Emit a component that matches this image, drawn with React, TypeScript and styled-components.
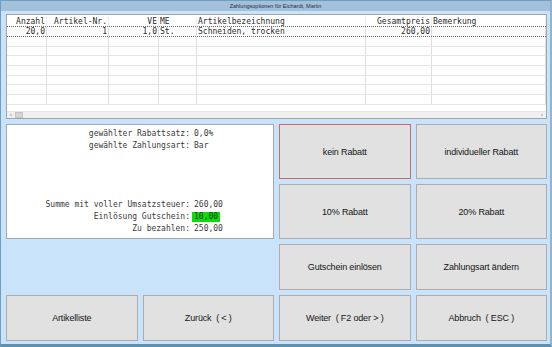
import React from "react"
import styled, { createGlobalStyle } from "styled-components"

const GlobalStyle = createGlobalStyle`
  html, body {
    margin: 0;
    padding: 0;
    overflow: hidden;
  }
  * {
    box-sizing: border-box;
  }
`

type Align = "left" | "right"

interface Column {
  title: string
  width: number
  align: Align
}

const columns: Column[] = [
  { title: "Anzahl", width: 40, align: "right" },
  { title: "Artikel-Nr.", width: 62, align: "right" },
  { title: "VE", width: 50, align: "right" },
  { title: "ME", width: 38, align: "left" },
  { title: "Artikelbezeichnung", width: 169, align: "left" },
  { title: "Gesamtpreis", width: 66, align: "right" },
  { title: "Bemerkung", width: 114, align: "left" },
]

const rows: string[][] = [["20,0", "1", "1,0", "St.", "Schneiden, trocken", "260,00", ""]]

const EMPTY_ROWS = 7

const gridTemplate = columns.map((c) => `${c.width}px`).join(" ")

interface InfoEntry {
  label: string
  value: string
  highlight?: boolean
}

const topInfo: InfoEntry[] = [
  { label: "gewählter Rabattsatz:", value: "0,0%" },
  { label: "gewählte Zahlungsart:", value: "Bar" },
]

const bottomInfo: InfoEntry[] = [
  { label: "Summe mit voller Umsatzsteuer:", value: "260,00" },
  { label: "Einlösung Gutschein:", value: "10,00", highlight: true },
  { label: "Zu bezahlen:", value: "250,00" },
]

interface Action {
  label: string
  col: number
  row: number
  isDefault?: boolean
}

const actions: Action[] = [
  { label: "kein Rabatt", col: 3, row: 1, isDefault: true },
  { label: "individueller Rabatt", col: 4, row: 1 },
  { label: "10% Rabatt", col: 3, row: 2 },
  { label: "20% Rabatt", col: 4, row: 2 },
  { label: "Gutschein einlösen", col: 3, row: 3 },
  { label: "Zahlungsart ändern", col: 4, row: 3 },
  { label: "Artikelliste", col: 1, row: 4 },
  { label: "Zurück  ( < )", col: 2, row: 4 },
  { label: "Weiter  ( F2 oder > )", col: 3, row: 4 },
  { label: "Abbruch  ( ESC )", col: 4, row: 4 },
]

const InfoLines: React.FC<{ entries: InfoEntry[] }> = ({ entries }) => (
  <S.InfoGroup>
    {entries.map((e) => (
      <S.InfoLine key={e.label}>
        <S.InfoLabel>{e.label}</S.InfoLabel>
        <S.InfoValue $highlight={e.highlight}>{e.value}</S.InfoValue>
      </S.InfoLine>
    ))}
  </S.InfoGroup>
)

export default function App() {
  return (
    <>
      <GlobalStyle />
      <S.Window>
        <S.TitleBar>Zahlungsoptionen für Eichardt, Martin</S.TitleBar>
        <S.Body>
          <S.Table>
            <S.Row $header>
              {columns.map((c) => (
                <S.Cell key={c.title} $align={c.align} $header>
                  {c.title}
                </S.Cell>
              ))}
            </S.Row>
            {rows.map((r, i) => (
              <S.Row key={i} $selected>
                {r.map((v, j) => (
                  <S.Cell key={j} $align={columns[j].align}>
                    {v}
                  </S.Cell>
                ))}
              </S.Row>
            ))}
            {Array.from({ length: EMPTY_ROWS }).map((_, i) => (
              <S.Row key={`e${i}`}>
                {columns.map((c) => (
                  <S.Cell key={c.title} $align={c.align} />
                ))}
              </S.Row>
            ))}
            <S.ScrollBar>
              <S.ScrollArrow>‹</S.ScrollArrow>
              <S.ScrollThumb />
              <S.ScrollTrack />
              <S.ScrollArrow>›</S.ScrollArrow>
            </S.ScrollBar>
          </S.Table>

          <S.ActionGrid>
            <S.InfoPanel>
              <InfoLines entries={topInfo} />
              <InfoLines entries={bottomInfo} />
            </S.InfoPanel>
            {actions.map((a) => (
              <S.ActionButton key={a.label} $col={a.col} $row={a.row} $default={a.isDefault}>
                {a.label}
              </S.ActionButton>
            ))}
          </S.ActionGrid>
        </S.Body>
      </S.Window>
    </>
  )
}

const S = {
  Window: styled.div`
    width: 552px;
    height: 347px;
    display: flex;
    flex-direction: column;
    background: #c8e3fa;
    border: 1px solid #6f9fbe;
    border-bottom: 3px solid #5f8fae;
    border-right: 2px solid #8fb4d0;
  `,
  TitleBar: styled.div`
    height: 10px;
    flex: none;
    background: #a4c1dc;
    color: #1e2c3a;
    font-family: "Liberation Sans", Arial, sans-serif;
    font-size: 5.5px;
    line-height: 10px;
    text-align: center;
  `,
  Body: styled.div`
    display: flex;
    flex-direction: column;
    padding: 3px 3px 0 5px;
  `,
  Table: styled.div`
    width: 541px;
    height: 105px;
    display: flex;
    flex-direction: column;
    background: #fff;
    border: 1px solid #a5a5a5;
    font-family: "DejaVu Sans Mono", monospace;
    font-size: 8px;
    color: #2b2b2b;
  `,
  Row: styled.div<{ $header?: boolean; $selected?: boolean }>`
    display: grid;
    grid-template-columns: ${gridTemplate};
    height: ${(p) => (p.$header ? 12 : p.$selected ? 11 : 10.7)}px;
    flex: none;
    padding-top: ${(p) => (p.$header ? 1 : 0)}px;
    border-top: 1px ${(p) => (p.$selected ? "dotted #6a6a6a" : "solid transparent")};
    border-bottom: 1px ${(p) => (p.$selected ? "dotted #6a6a6a" : p.$header ? "solid transparent" : "solid #e6e6e6")};
    margin-top: ${(p) => (p.$header ? 0 : -1)}px;
  `,
  Cell: styled.div<{ $align: Align; $header?: boolean }>`
    padding: 0 1px;
    text-align: ${(p) => p.$align};
    line-height: 9px;
    white-space: pre;
    overflow: hidden;
    border-right: 1px solid ${(p) => (p.$header ? "#ededed" : "#dedede")};
  `,
  ScrollBar: styled.div`
    margin-top: auto;
    height: 7px;
    display: flex;
    align-items: stretch;
    background: #f0f0f0;
    border-top: 1px solid #e6e6e6;
  `,
  ScrollArrow: styled.div`
    width: 8px;
    font-family: "DejaVu Sans", sans-serif;
    font-size: 7px;
    line-height: 6px;
    text-align: center;
    color: #8a8a8a;
  `,
  ScrollThumb: styled.div`
    width: 8px;
    background: #d6d6d6;
    border: 1px solid #c4c4c4;
  `,
  ScrollTrack: styled.div`
    flex: 1;
  `,
  ActionGrid: styled.div`
    margin-top: 5px;
    width: 541px;
    display: grid;
    grid-template-columns: repeat(4, 1fr);
    grid-template-rows: 55px 55px 46px 46px;
    gap: 5px;
  `,
  InfoPanel: styled.div`
    grid-column: 1 / span 2;
    grid-row: 1 / span 2;
    display: flex;
    flex-direction: column;
    justify-content: space-between;
    padding: 3px 0;
    background: #fff;
    border: 1px solid #a8a8a8;
    font-family: "DejaVu Sans Mono", monospace;
    font-size: 8px;
    color: #3a3a3a;
  `,
  InfoGroup: styled.div`
    display: flex;
    flex-direction: column;
  `,
  InfoLine: styled.div`
    display: grid;
    grid-template-columns: 183px auto;
    justify-content: start;
    column-gap: 4px;
    line-height: 12px;
  `,
  InfoLabel: styled.span`
    text-align: right;
    white-space: pre;
  `,
  InfoValue: styled.span<{ $highlight?: boolean }>`
    justify-self: start;
    padding: 0 2px;
    margin-left: -2px;
    line-height: 10px;
    align-self: center;
    background: ${(p) => (p.$highlight ? "#0add0a" : "transparent")};
    color: ${(p) => (p.$highlight ? "#0a3a0a" : "inherit")};
  `,
  ActionButton: styled.button<{ $default?: boolean; $col: number; $row: number }>`
    grid-column: ${(p) => p.$col};
    grid-row: ${(p) => p.$row};
    margin: 0;
    padding: 0;
    background: #e1e1e1;
    border: 1px solid ${(p) => (p.$default ? "#d06868" : "#adadad")};
    font-family: "Liberation Sans", Arial, sans-serif;
    font-size: 9px;
    letter-spacing: -0.15px;
    color: #151515;
    white-space: pre;
  `,
}
